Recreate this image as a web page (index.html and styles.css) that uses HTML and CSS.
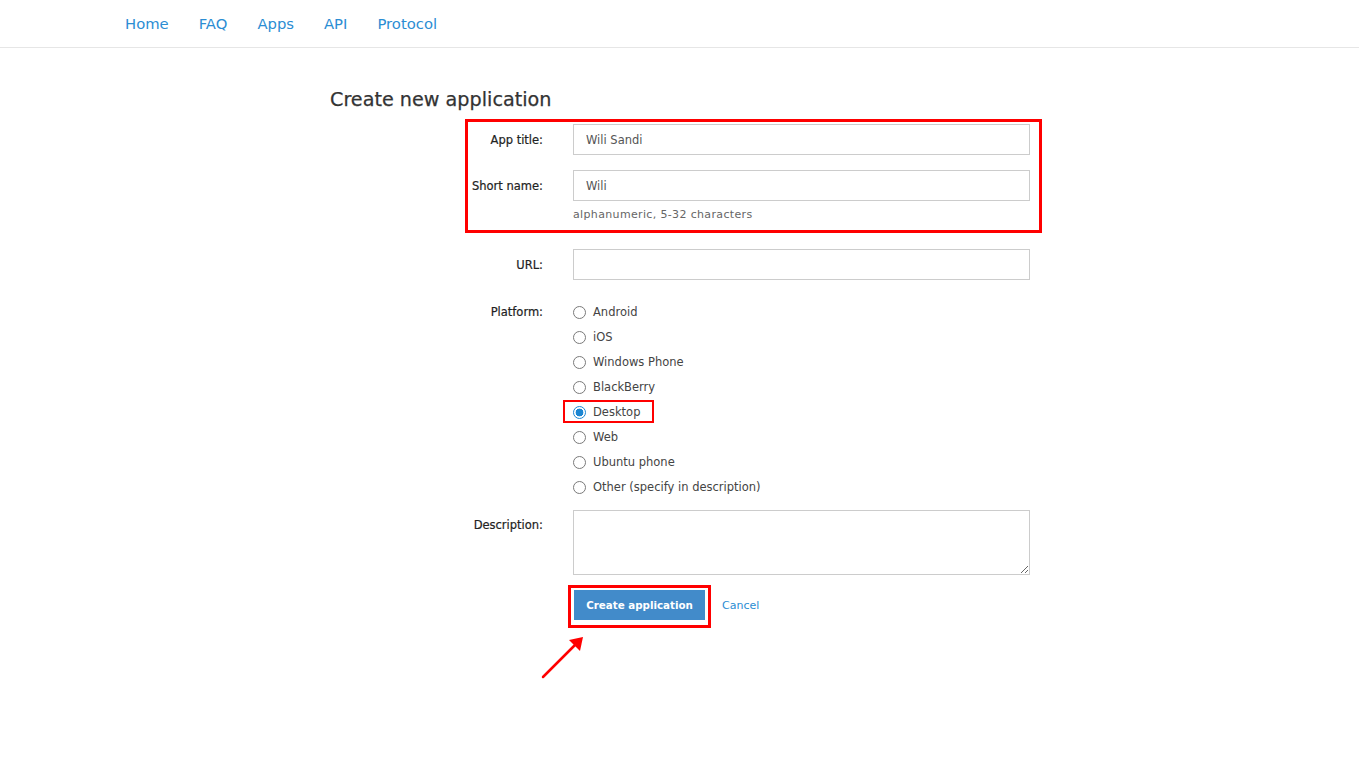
FILE: index.html
```html
<!DOCTYPE html>
<html>
<head>
<meta charset="utf-8">
<title>Create new application</title>
<link rel="stylesheet" href="styles.css">
</head>
<body>
<header class="topbar">
  <nav class="nav">
    <a href="#">Home</a>
    <a href="#">FAQ</a>
    <a href="#">Apps</a>
    <a href="#">API</a>
    <a href="#">Protocol</a>
  </nav>
</header>
<main class="page">
  <h1 class="title">Create new application</h1>
  <form class="form">
    <div class="row">
      <label class="label">App title:</label>
      <div class="field"><input class="input" type="text" value="Wili Sandi"></div>
    </div>
    <div class="row">
      <label class="label">Short name:</label>
      <div class="field">
        <input class="input" type="text" value="Wili">
        <div class="hint">alphanumeric, 5-32 characters</div>
      </div>
    </div>
    <div class="row row-url">
      <label class="label">URL:</label>
      <div class="field"><input class="input" type="text" value=""></div>
    </div>
    <div class="row row-platform">
      <label class="label label-top">Platform:</label>
      <div class="field radios">
        <label class="radio"><input type="radio" name="p"><span>Android</span></label>
        <label class="radio"><input type="radio" name="p"><span>iOS</span></label>
        <label class="radio"><input type="radio" name="p"><span>Windows Phone</span></label>
        <label class="radio"><input type="radio" name="p"><span>BlackBerry</span></label>
        <label class="radio"><input type="radio" name="p" checked><span>Desktop</span></label>
        <label class="radio"><input type="radio" name="p"><span>Web</span></label>
        <label class="radio"><input type="radio" name="p"><span>Ubuntu phone</span></label>
        <label class="radio"><input type="radio" name="p"><span>Other (specify in description)</span></label>
      </div>
    </div>
    <div class="row row-desc">
      <label class="label label-desc">Description:</label>
      <div class="field"><textarea class="textarea"></textarea></div>
    </div>
    <div class="row row-actions">
      <div class="label"></div>
      <div class="field actions">
        <button type="button" class="btn">Create application</button>
        <a href="#" class="cancel">Cancel</a>
      </div>
    </div>
  </form>
</main>

<div class="mark mark-top"></div>
<div class="mark mark-desktop"></div>
<div class="mark mark-btn"></div>
<svg class="arrow" width="60" height="60" viewBox="0 0 60 60">
  <line x1="5" y1="53" x2="38" y2="20" stroke="#f00" stroke-width="2.5" stroke-linecap="round"/>
  <polygon points="45,13 42,27 31,16" fill="#f00"/>
</svg>
</body>
</html>
```

FILE: styles.css
```css
html, body {
  margin: 0;
  padding: 0;
  background: #fff;
}
body {
  font-family: "DejaVu Sans", "Liberation Sans", sans-serif;
  color: #333;
  position: relative;
  min-height: 767px;
}
.topbar {
  height: 47px;
  border-bottom: 1px solid #e6e6e6;
}
.nav {
  display: flex;
  gap: 30px;
  padding-left: 125px;
  height: 47px;
  align-items: center;
}
.nav a {
  color: #2b8dd3;
  text-decoration: none;
  font-size: 14.8px;
  line-height: 20px;
}
.page {
  padding-left: 330px;
}
.title {
  margin: 0;
  padding-top: 40px;
  font-size: 19.2px;
  font-weight: normal;
  line-height: 24px;
  color: #333;
  -webkit-text-stroke: 0.25px #333;
}
.form {
  margin-top: 12px;
}
.row {
  display: grid;
  grid-template-columns: 213px 457px;
  column-gap: 30px;
  margin-bottom: 15px;
}
.label {
  text-align: right;
  font-size: 11.5px;
  line-height: 30px;
  padding-top: 1px;
  color: #222;
  -webkit-text-stroke: 0.2px #222;
}
.input {
  display: block;
  box-sizing: border-box;
  width: 457px;
  height: 31px;
  margin: 0;
  border: 1px solid #ccc;
  border-radius: 0;
  padding: 0 12px;
  font-family: "DejaVu Sans", sans-serif;
  font-size: 11.5px;
  color: #555;
  outline: none;
}
.hint {
  margin-top: 7px;
  font-size: 11px;
  letter-spacing: 0.35px;
  line-height: 14px;
  color: #666;
}
.row-url {
  margin-top: 27px;
  margin-bottom: 19px;
}
.row-platform {
  margin-bottom: 0;
}
.label-top {
  line-height: 24px;
}
.radios {
  display: flex;
  flex-direction: column;
}
.radio {
  display: flex;
  align-items: center;
  height: 25px;
  font-size: 11.5px;
  color: #444;
}
.radio input {
  -webkit-appearance: none;
  appearance: none;
  width: 13px;
  height: 13px;
  margin: 2px 7px 0 0;
  border: 1px solid #7a7a7a;
  border-radius: 50%;
  box-sizing: border-box;
  background: #fff;
  flex: none;
}
.radio input:checked {
  border: 1px solid #1b86d2;
  background: radial-gradient(circle, #1b86d2 0 3.6px, #fff 4.2px);
}
.row-desc {
  margin-top: 11px;
  margin-bottom: 0;
}
.label-desc {
  line-height: 30px;
  padding-top: 0;
}
.textarea {
  display: block;
  box-sizing: border-box;
  width: 457px;
  height: 65px;
  margin: 0;
  border: 1px solid #ccc;
  border-radius: 0;
  padding: 6px 12px;
  font-family: "DejaVu Sans", sans-serif;
  font-size: 11.5px;
  outline: none;
}
.row-actions {
  margin-top: 15px;
}
.actions {
  display: flex;
  align-items: center;
  gap: 17px;
}
.btn {
  box-sizing: border-box;
  width: 131px;
  height: 30px;
  margin-left: 1px;
  border: none;
  border-radius: 0;
  background: #428bca;
  color: #fff;
  font-family: "DejaVu Sans", sans-serif;
  font-weight: bold;
  font-size: 10.3px;
  padding: 0;
}
.cancel {
  color: #2b8dd3;
  text-decoration: none;
  font-size: 11px;
}
.mark {
  position: absolute;
  box-sizing: border-box;
  border: 3px solid #f00;
}
.mark-top {
  left: 465px;
  top: 119px;
  width: 577px;
  height: 114px;
}
.mark-desktop {
  left: 563px;
  top: 400px;
  width: 91px;
  height: 23px;
  border-width: 2.5px;
}
.mark-btn {
  left: 568px;
  top: 585px;
  width: 143px;
  height: 43px;
}
.arrow {
  position: absolute;
  left: 538px;
  top: 624px;
}
```
